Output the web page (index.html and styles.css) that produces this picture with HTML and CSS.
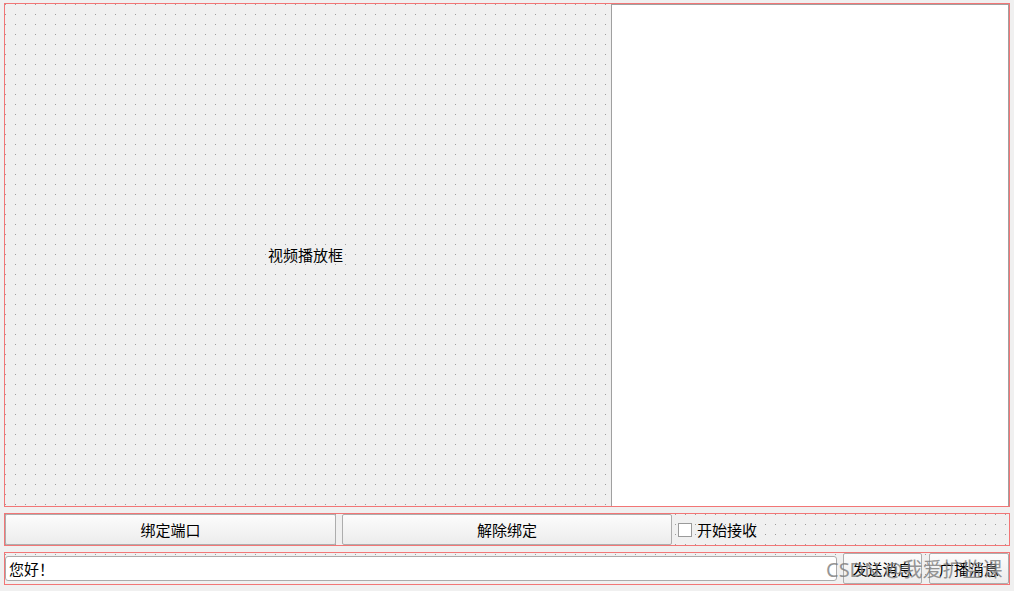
FILE: index.html
```html
<!DOCTYPE html>
<html lang="zh">
<head>
<meta charset="utf-8">
<title>Form</title>
<link rel="stylesheet" href="styles.css">
</head>
<body>
<div class="form">
  <div class="frame top">
    <div class="video"><span>视频播放框</span></div>
    <div class="textpanel"></div>
  </div>
  <div class="frame row">
    <button class="btn b1">绑定端口</button>
    <button class="btn b2">解除绑定</button>
    <label class="check"><span class="box"></span><span>开始接收</span></label>
  </div>
  <div class="frame row row3">
    <div class="edit">您好！</div>
    <button class="btn send">发送消息</button>
    <button class="btn cast">广播消息</button>
  </div>
  <div class="watermark">CSDN @我爱扩监课</div>
</div>
</body>
</html>
```

FILE: styles.css
```css
html, body {
  margin: 0;
  padding: 0;
}
body {
  width: 1014px;
  height: 591px;
  overflow: hidden;
  background-color: #f0f0f0;
  background-image: url("data:image/svg+xml,%3Csvg xmlns='http://www.w3.org/2000/svg' width='10' height='10' shape-rendering='crispEdges'%3E%3Crect x='0' y='0' width='1' height='1' fill='%239c9c9c'/%3E%3C/svg%3E");
  background-position: 5px 4px;
  background-size: 10px 10px;
  font-family: "Noto Sans CJK SC", "Noto Sans", sans-serif;
  font-size: 15px;
  color: #000;
}
.form {
  position: relative;
  padding: 3px 4px 0 4px;
  display: flex;
  flex-direction: column;
  gap: 6px;
}
.frame {
  border: 1px solid #f27676;
  box-sizing: border-box;
  width: 1006px;
}
.top {
  height: 504px;
  display: flex;
}
.video {
  width: 606px;
  display: flex;
  align-items: center;
  justify-content: center;
  padding: 0 5px 2px 0;
  box-sizing: border-box;
}
.textpanel {
  flex: 1;
  background: #fff;
  border: 1px solid #a0a0a0;
  border-bottom: none;
}
.row {
  height: 33px;
  display: flex;
  align-items: center;
}
.btn {
  font: inherit;
  color: #000;
  height: 31px;
  box-sizing: border-box;
  border: 1px solid #adadad;
  border-radius: 2px;
  background: linear-gradient(#fcfcfc, #ececec);
  padding: 0;
  margin: 0;
  line-height: 1;
}
.b1 { width: 331px; }
.b2 { width: 330px; margin-left: 6px; }
.check {
  display: flex;
  align-items: center;
  margin-left: 6px;
  gap: 5px;
  padding-bottom: 1px;
}
.box {
  width: 14px;
  height: 14px;
  box-sizing: border-box;
  border: 1px solid #9a9a9a;
  background: #fff;
  margin-top: 1px;
}
.edit {
  width: 832px;
  height: 25px;
  box-sizing: border-box;
  border: 1px solid #ababab;
  border-radius: 3px;
  background: #fff;
  padding: 0 3px;
  display: flex;
  align-items: center;
  line-height: 1;
}
.send { width: 79px; margin-left: 6px; }
.cast { width: 80px; margin-left: 7px; }
.watermark {
  position: absolute;
  z-index: 2;
  left: 826px;
  top: 557px;
  font-size: 20px;
  line-height: 26px;
  color: #7c7c7c;
  opacity: 0.8;
  font-family: "Noto Sans", "Noto Sans CJK SC", sans-serif;
  white-space: nowrap;
  pointer-events: none;
}
```
